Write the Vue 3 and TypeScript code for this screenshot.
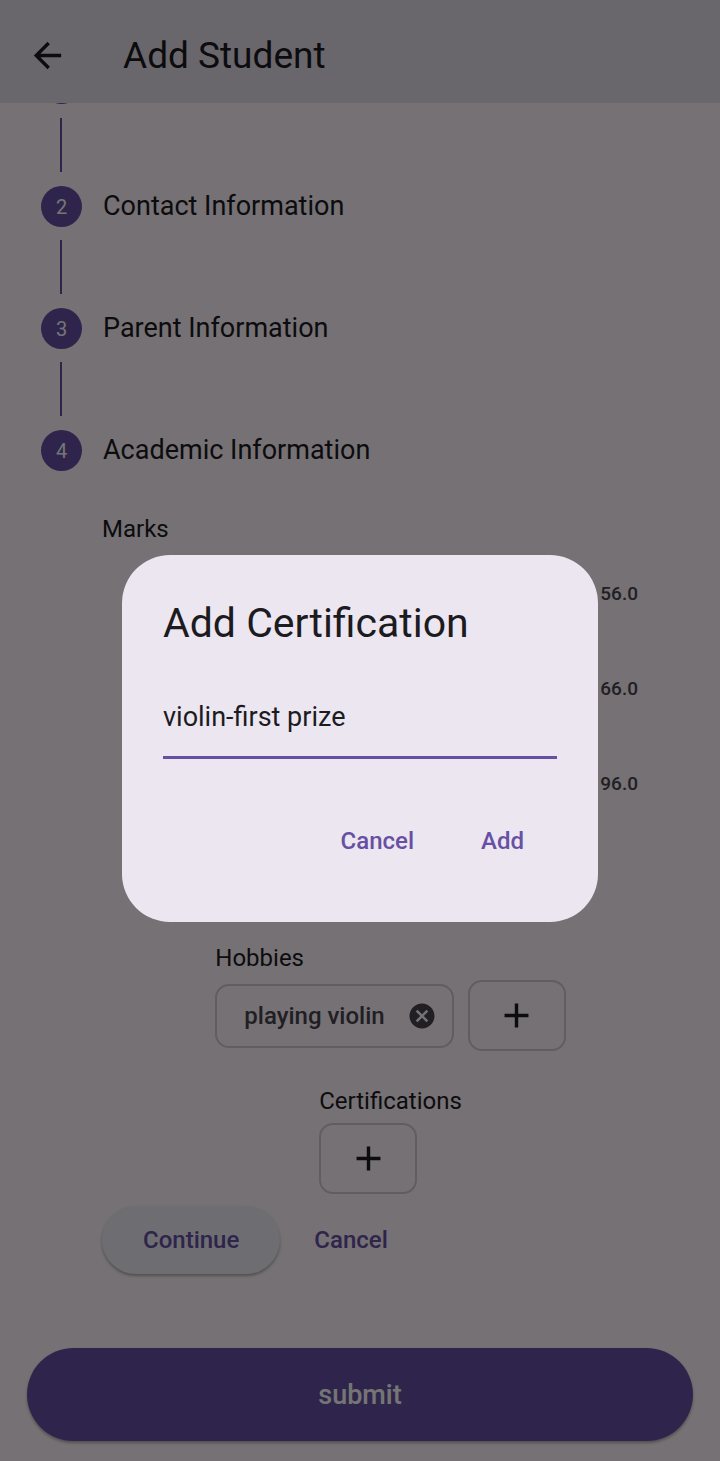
<script setup lang="ts">
import { ref } from 'vue'

interface Step {
  number: number
  title: string
}

const steps: Step[] = [
  { number: 2, title: 'Contact Information' },
  { number: 3, title: 'Parent Information' },
  { number: 4, title: 'Academic Information' },
]
const marks: string[] = ['56.0', '66.0', '96.0']
const hobbies = ref<string[]>(['playing violin'])
const certification = ref('violin-first prize')

function removeHobby(index: number): void {
  hobbies.value.splice(index, 1)
}
</script>

<template>
  <div class="screen">
    <div class="page">
      <header class="app-bar">
        <button class="back" type="button" aria-label="Back">
          <svg viewBox="0 0 24 24" width="41" height="41" aria-hidden="true">
            <path d="M20 11H7.83l5.59-5.59L12 4l-8 8 8 8 1.41-1.41L7.83 13H20v-2z" />
          </svg>
        </button>
        <h1>Add Student</h1>
      </header>

      <main class="stepper">
        <div class="previous"><span class="bullet"></span></div>
        <template v-for="step in steps" :key="step.number">
          <span class="connector"></span>
          <div class="step">
            <span class="bullet">{{ step.number }}</span>
            <h2>{{ step.title }}</h2>
          </div>
        </template>

        <section class="content">
          <h3>Marks</h3>
          <ul class="marks">
            <li v-for="mark in marks" :key="mark">{{ mark }}</li>
          </ul>

          <div class="group hobbies">
            <h3>Hobbies</h3>
            <div class="chips">
              <span v-for="(hobby, index) in hobbies" :key="hobby" class="chip">
                {{ hobby }}
                <button type="button" :aria-label="`Remove ${hobby}`" @click="removeHobby(index)">
                  <svg viewBox="0 0 24 24" width="30" height="30" aria-hidden="true">
                    <path
                      d="M12 2C6.47 2 2 6.47 2 12s4.47 10 10 10 10-4.47 10-10S17.53 2 12 2zm5 13.59L15.59 17 12 13.41 8.41 17 7 15.59 10.59 12 7 8.41 8.41 7 12 10.59 15.59 7 17 8.41 13.41 12 17 15.59z"
                    />
                  </svg>
                </button>
              </span>
              <button class="plus" type="button" aria-label="Add hobby">
                <svg viewBox="0 0 24 24" width="41" height="41" aria-hidden="true">
                  <path d="M19 13h-6v6h-2v-6H5v-2h6V5h2v6h6v2z" />
                </svg>
              </button>
            </div>
          </div>

          <div class="group certifications">
            <h3>Certifications</h3>
            <div class="chips">
              <button class="plus" type="button" aria-label="Add certification">
                <svg viewBox="0 0 24 24" width="41" height="41" aria-hidden="true">
                  <path d="M19 13h-6v6h-2v-6H5v-2h6V5h2v6h6v2z" />
                </svg>
              </button>
            </div>
          </div>

          <div class="controls">
            <button class="continue" type="button">Continue</button>
            <button class="text-button" type="button">Cancel</button>
          </div>
        </section>
      </main>

      <footer class="footer">
        <button class="submit" type="submit">submit</button>
      </footer>
    </div>

    <div class="scrim">
      <form class="dialog" role="dialog" aria-labelledby="dialog-title" @submit.prevent>
        <h2 id="dialog-title">Add Certification</h2>
        <input v-model="certification" type="text" aria-labelledby="dialog-title" />
        <div class="dialog-actions">
          <button class="text-button" type="button">Cancel</button>
          <button class="text-button" type="submit">Add</button>
        </div>
      </form>
    </div>
  </div>
</template>

<style>
body {
  margin: 0;
  background: #767276;
}
</style>

<style scoped>
.screen {
  position: relative;
  font-family: Roboto, 'Liberation Sans', sans-serif;
  color: #1c1b1f;
}

.screen *,
.screen *::before {
  box-sizing: border-box;
}

h1,
h2,
h3,
ul {
  margin: 0;
  padding: 0;
  font-weight: 400;
}

button {
  border: 0;
  padding: 0;
  background: none;
  font: inherit;
  color: inherit;
  cursor: pointer;
}

svg {
  display: block;
  fill: currentColor;
}

.page {
  display: flex;
  flex-direction: column;
  min-height: 100vh;
  background: #fff6fc;
}

.app-bar {
  display: flex;
  align-items: center;
  gap: 55px;
  padding: 16px 27px 8px;
  height: 103px;
  background: #e4deec;
}

.app-bar h1 {
  font-size: 37px;
  line-height: 48px;
}

.stepper {
  display: flex;
  flex-direction: column;
  padding: 0 41px;
}

.previous {
  display: flex;
  height: 1px;
  align-items: flex-end;
  overflow: hidden;
}

.bullet {
  display: flex;
  flex: none;
  align-items: center;
  justify-content: center;
  width: 41px;
  height: 41px;
  border-radius: 50%;
  background: #6750a4;
  color: #fff;
  font-size: 20px;
}

.connector {
  width: 2px;
  height: 54px;
  margin: 14px 0 14px 19px;
  background: #6750a4;
}

.step + .connector {
  margin-top: 13px;
}

.step {
  display: flex;
  align-items: center;
  gap: 21px;
}

.step h2 {
  font-size: 27px;
  line-height: 36px;
  padding-bottom: 2px;
}

.content {
  display: flex;
  flex-direction: column;
  padding: 41px 0 0 61px;
}

h3 {
  font-size: 24px;
  line-height: 34px;
}

.marks {
  list-style: none;
  padding-right: 41px;
}

.marks li {
  display: flex;
  align-items: center;
  justify-content: flex-end;
  height: 95px;
  font-size: 19px;
  font-weight: 500;
  color: #49454f;
}

.group {
  align-self: center;
}

.hobbies {
  margin-top: 110px;
}

.certifications {
  margin-top: 33px;
}

.chips {
  display: flex;
  align-items: center;
  gap: 14px;
  margin-top: 5px;
}

.chip,
.plus {
  display: flex;
  align-items: center;
  border: 2px solid #d2ccd6;
  border-radius: 14px;
}

.chip {
  gap: 22px;
  height: 64px;
  padding: 0 15px 0 27px;
  font-size: 24px;
  font-weight: 500;
  color: #49454f;
}

.plus {
  justify-content: center;
  width: 98px;
  height: 71px;
}

.controls {
  display: flex;
  gap: 14px;
  margin-top: 12px;
}

.continue,
.text-button {
  height: 68px;
  border-radius: 34px;
  font-size: 24px;
  font-weight: 500;
  color: #6750a4;
}

.continue {
  padding: 0 41px;
  background: #f0eef8;
  box-shadow: 0 2px 3px rgba(0, 0, 0, 0.3);
}

.text-button {
  padding: 0 20px;
}

.footer {
  display: flex;
  margin-top: auto;
  padding: 20px 27px;
}

.submit {
  flex: 1;
  height: 93px;
  border-radius: 47px;
  background: #6750a4;
  box-shadow: 0 2px 3px rgba(0, 0, 0, 0.3);
  color: #fff;
  font-size: 27px;
  font-weight: 500;
}

.scrim {
  position: absolute;
  inset: 0;
  display: flex;
  align-items: center;
  justify-content: center;
  padding-top: 16px;
  background: rgba(0, 0, 0, 0.54);
}

.dialog {
  display: flex;
  flex-direction: column;
  width: 476px;
  max-width: 90%;
  padding: 41px;
  border-radius: 48px;
  background: #ece6f0;
}

.dialog h2 {
  font-size: 41px;
  line-height: 54px;
}

.dialog input {
  width: 100%;
  height: 82px;
  margin: 27px 0 41px;
  padding: 0;
  border: 0;
  border-bottom: 3px solid #6750a4;
  border-radius: 0;
  outline: 0;
  background: none;
  color: #1c1b1f;
  font-family: inherit;
  font-size: 27px;
}

.dialog-actions {
  display: flex;
  justify-content: flex-end;
  gap: 14px;
}

.dialog-actions .text-button {
  min-width: 109px;
  height: 81px;
}
</style>
